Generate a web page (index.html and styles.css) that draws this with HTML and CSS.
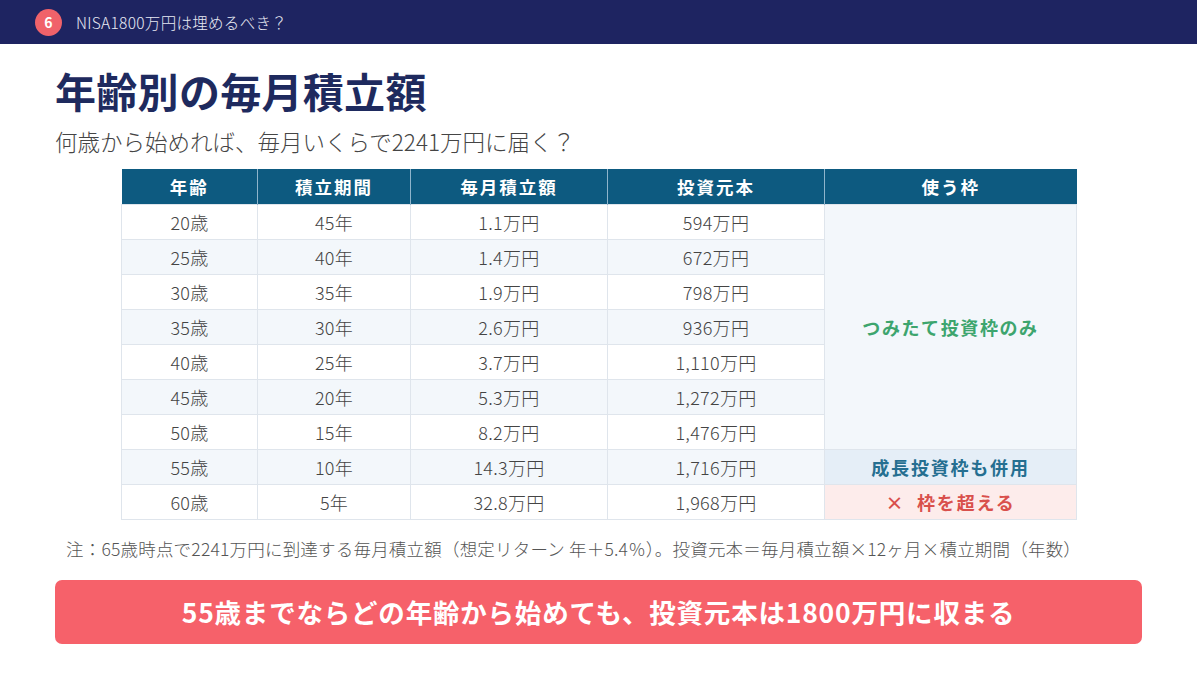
FILE: index.html
```html
<!DOCTYPE html>
<html lang="ja">
<head>
<meta charset="utf-8">
<link rel="stylesheet" href="styles.css">
</head>
<body>
<div class="slide">
  <header class="topbar">
    <span class="badge">6</span>
    <span class="topbar-title">NISA1800万円は埋めるべき？</span>
  </header>
  <main class="content">
    <h1 class="title">年齢別の毎月積立額</h1>
    <p class="subtitle">何歳から始めれば、毎月いくらで2241万円に届く？</p>
    <table class="grid">
      <colgroup>
        <col class="c1"><col class="c2"><col class="c3"><col class="c4"><col class="c5">
      </colgroup>
      <thead>
        <tr><th>年齢</th><th>積立期間</th><th>毎月積立額</th><th>投資元本</th><th>使う枠</th></tr>
      </thead>
      <tbody>
        <tr><td>20歳</td><td>45年</td><td>1.1万円</td><td>594万円</td><td rowspan="7" class="frame-green">つみたて投資枠のみ</td></tr>
        <tr class="alt"><td>25歳</td><td>40年</td><td>1.4万円</td><td>672万円</td></tr>
        <tr><td>30歳</td><td>35年</td><td>1.9万円</td><td>798万円</td></tr>
        <tr class="alt"><td>35歳</td><td>30年</td><td>2.6万円</td><td>936万円</td></tr>
        <tr><td>40歳</td><td>25年</td><td>3.7万円</td><td>1,110万円</td></tr>
        <tr class="alt"><td>45歳</td><td>20年</td><td>5.3万円</td><td>1,272万円</td></tr>
        <tr><td>50歳</td><td>15年</td><td>8.2万円</td><td>1,476万円</td></tr>
        <tr class="alt"><td>55歳</td><td>10年</td><td>14.3万円</td><td>1,716万円</td><td class="frame-blue">成長投資枠も併用</td></tr>
        <tr><td>60歳</td><td>5年</td><td>32.8万円</td><td>1,968万円</td><td class="frame-red">×&nbsp;&nbsp;枠を超える</td></tr>
      </tbody>
    </table>
    <p class="note">注：65歳時点で2241万円に到達する毎月積立額（想定リターン 年＋5.4％）。投資元本＝毎月積立額×12ヶ月×積立期間（年数）</p>
    <div class="banner">55歳までならどの年齢から始めても、投資元本は1800万円に収まる</div>
  </main>
</div>
</body>
</html>
```

FILE: styles.css
```css
* { box-sizing: border-box; }
html, body { margin: 0; padding: 0; background: #ffffff; }
body {
  font-family: "Noto Sans CJK JP", "Noto Sans", sans-serif;
  width: 1200px;
  height: 675px;
  overflow: hidden;
}
.slide { width: 1197px; height: 675px; }
.topbar {
  height: 44px;
  background: #1e2461;
  display: flex;
  align-items: center;
  padding-left: 35px;
}
.badge {
  width: 27px;
  height: 27px;
  border-radius: 50%;
  background: #f0626a;
  color: #fff;
  font-size: 14px;
  font-weight: 700;
  display: flex;
  align-items: center;
  justify-content: center;
  margin-right: 14px;
}
.topbar-title {
  color: #e8eaf4;
  font-size: 15.5px;
  font-weight: 300;
  letter-spacing: 0.3px;
}
.content {
  padding: 0 0 0 55px;
  display: flex;
  flex-direction: column;
}
.title {
  margin: 19px 0 0 0;
  font-size: 41px;
  line-height: 54px;
  font-weight: 700;
  color: #1e2a5e;
  letter-spacing: 0.3px;
}
.subtitle {
  margin: 9px 0 0 0;
  font-size: 22.5px;
  line-height: 30px;
  font-weight: 300;
  color: #454545;
}
.grid {
  margin: 13px 0 0 66px;
  width: 955px;
  border-collapse: collapse;
  table-layout: fixed;
  font-size: 18px;
  font-weight: 300;
  letter-spacing: 0.3px;
  color: #444444;
}
.c1 { width: 136px; }
.c2 { width: 153px; }
.c3 { width: 197px; }
.c4 { width: 217px; }
.c5 { width: 252px; }
.grid th {
  height: 35px;
  background: #0d5a80;
  color: #ffffff;
  font-weight: 700;
  font-size: 17.5px;
  letter-spacing: 2px;
  border-left: 1px solid #8fb5cc;
  padding: 0;
}
.grid th:first-child { border-left: none; }
.grid td {
  height: 35px;
  padding: 0;
  text-align: center;
  border: 1px solid #dfe5ec;
  background: #ffffff;
}
.grid tr.alt td { background: #f3f7fb; }
.grid td.frame-green {
  background: #f3f7fb;
  color: #3da56e;
  font-weight: 700;
  font-size: 18px;
  letter-spacing: 1.6px;
}
.grid tr.alt td.frame-blue {
  background: #e5eef7;
  color: #256f91;
  font-weight: 700;
  font-size: 18px;
  letter-spacing: 1.8px;
}
.grid td.frame-red {
  background: #fdeceb;
  color: #d9504c;
  font-weight: 700;
  font-size: 18px;
  letter-spacing: 1.8px;
}
.note {
  margin: 17px 0 0 11px;
  font-size: 17.5px;
  line-height: 24px;
  font-weight: 300;
  letter-spacing: 0.2px;
  color: #555555;
}
.banner {
  margin-top: 19px;
  width: 1087px;
  height: 64px;
  border-radius: 7px;
  background: #f6616a;
  color: #ffffff;
  font-size: 26.5px;
  font-weight: 700;
  display: flex;
  align-items: center;
  justify-content: center;
  letter-spacing: 0.8px;
}
```
